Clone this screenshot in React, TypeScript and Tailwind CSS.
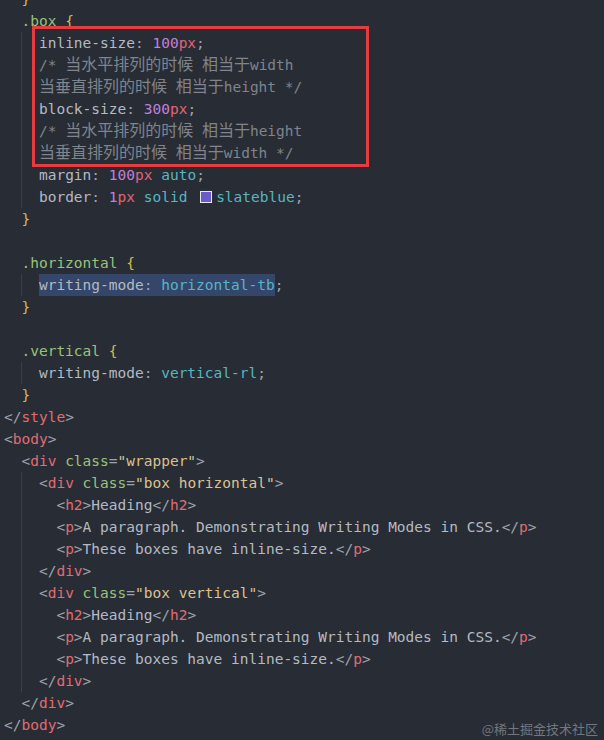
type Tok = [string, string];

interface Line {
  indent: number;
  guide?: boolean;
  tokens: Tok[];
  selected?: number; // number of leading tokens inside the selection
}

const txt = "text-[#b4bac4]";
const sel = "text-[#98c379]";
const brace = "text-[#d9b94a]";
const num = "text-[#c47fdc]";
const unit = "text-[#e0657a]";
const val = "text-[#56b6c2]";
const com = "text-[#7f848e]";
const tag = "text-[#e06c75]";
const punc = "text-[#9ea4ad]";
const attr = "text-[#98c379]";
const str = "text-[#dcc290]";
const cjk = "text-[#7f848e] text-[16px]";

const tagOpen = (name: string): Tok[] => [
  [punc, "<"],
  [tag, name],
  [punc, ">"],
];
const tagClose = (name: string): Tok[] => [
  [punc, "</"],
  [tag, name],
  [punc, ">"],
];
const divWithClass = (cls: string): Tok[] => [
  [punc, "<"],
  [tag, "div"],
  [txt, " "],
  [attr, "class"],
  [punc, "="],
  [str, `"${cls}"`],
  [punc, ">"],
];

const lines: Line[] = [
  { indent: 2, tokens: [[brace, "}"]] },
  { indent: 2, tokens: [[sel, ".box"], [txt, " "], [brace, "{"]] },
  {
    indent: 4,
    guide: true,
    tokens: [[txt, "inline-size"], [punc, ": "], [num, "100"], [unit, "px"], [punc, ";"]],
  },
  {
    indent: 4,
    guide: true,
    tokens: [[com, "/* "], [cjk, "当水平排列的时候"], [com, " "], [cjk, "相当于"], [com, "width"]],
  },
  {
    indent: 4,
    guide: true,
    tokens: [[cjk, "当垂直排列的时候"], [com, " "], [cjk, "相当于"], [com, "height */"]],
  },
  {
    indent: 4,
    guide: true,
    tokens: [[txt, "block-size"], [punc, ": "], [num, "300"], [unit, "px"], [punc, ";"]],
  },
  {
    indent: 4,
    guide: true,
    tokens: [[com, "/* "], [cjk, "当水平排列的时候"], [com, " "], [cjk, "相当于"], [com, "height"]],
  },
  {
    indent: 4,
    guide: true,
    tokens: [[cjk, "当垂直排列的时候"], [com, " "], [cjk, "相当于"], [com, "width */"]],
  },
  {
    indent: 4,
    guide: true,
    tokens: [[txt, "margin"], [punc, ": "], [num, "100"], [unit, "px"], [txt, " "], [val, "auto"], [punc, ";"]],
  },
  {
    indent: 4,
    guide: true,
    tokens: [
      [txt, "border"],
      [punc, ": "],
      [num, "1"],
      [unit, "px"],
      [txt, " "],
      [val, "solid"],
      [txt, " "],
      ["swatch", ""],
      [val, "slateblue"],
      [punc, ";"],
    ],
  },
  { indent: 2, tokens: [[brace, "}"]] },
  { indent: 0, tokens: [] },
  { indent: 2, tokens: [[sel, ".horizontal"], [txt, " "], [brace, "{"]] },
  {
    indent: 4,
    guide: true,
    selected: 3,
    tokens: [[txt, "writing-mode"], [punc, ": "], [val, "horizontal-tb"], [punc, ";"]],
  },
  { indent: 2, tokens: [[brace, "}"]] },
  { indent: 0, tokens: [] },
  { indent: 2, tokens: [[sel, ".vertical"], [txt, " "], [brace, "{"]] },
  {
    indent: 4,
    guide: true,
    tokens: [[txt, "writing-mode"], [punc, ": "], [val, "vertical-rl"], [punc, ";"]],
  },
  { indent: 2, tokens: [[brace, "}"]] },
  { indent: 0, tokens: tagClose("style") },
  { indent: 0, tokens: tagOpen("body") },
  { indent: 2, tokens: divWithClass("wrapper") },
  { indent: 4, guide: true, tokens: divWithClass("box horizontal") },
  { indent: 6, guide: true, tokens: [...tagOpen("h2"), [txt, "Heading"], ...tagClose("h2")] },
  {
    indent: 6,
    guide: true,
    tokens: [...tagOpen("p"), [txt, "A paragraph. Demonstrating Writing Modes in CSS."], ...tagClose("p")],
  },
  {
    indent: 6,
    guide: true,
    tokens: [...tagOpen("p"), [txt, "These boxes have inline-size."], ...tagClose("p")],
  },
  { indent: 4, guide: true, tokens: tagClose("div") },
  { indent: 4, guide: true, tokens: divWithClass("box vertical") },
  { indent: 6, guide: true, tokens: [...tagOpen("h2"), [txt, "Heading"], ...tagClose("h2")] },
  {
    indent: 6,
    guide: true,
    tokens: [...tagOpen("p"), [txt, "A paragraph. Demonstrating Writing Modes in CSS."], ...tagClose("p")],
  },
  {
    indent: 6,
    guide: true,
    tokens: [...tagOpen("p"), [txt, "These boxes have inline-size."], ...tagClose("p")],
  },
  { indent: 4, guide: true, tokens: tagClose("div") },
  { indent: 2, tokens: tagClose("div") },
  { indent: 0, tokens: tagClose("body") },
];

function Token({ t }: { t: Tok }) {
  if (t[0] === "swatch") {
    return (
      <span className="inline-block align-middle w-[12px] h-[12px] ml-[4px] mr-[4px] -mt-[3px] bg-[#6a5acd] border border-[#e8e8f0]" />
    );
  }
  return <span className={t[0]}>{t[1]}</span>;
}

function CodeLine({ line }: { line: Line }) {
  const { indent, guide, tokens, selected = 0 } = line;
  const head = tokens.slice(0, selected);
  const rest = tokens.slice(selected);
  return (
    <div className="h-[22px] leading-[22px] whitespace-pre pl-[4px]">
      {guide ? (
        <>
          <span>{"  "}</span>
          <span className="inline-block align-top h-[22px] shadow-[inset_1px_0_0_#3b4048]">
            {" ".repeat(indent - 2)}
          </span>
        </>
      ) : (
        <span>{" ".repeat(indent)}</span>
      )}
      {head.length > 0 && (
        <span className="inline-block align-top h-[22px] bg-[#34466a]">
          {head.map((t, i) => (
            <Token key={i} t={t} />
          ))}
        </span>
      )}
      {rest.map((t, i) => (
        <Token key={i} t={t} />
      ))}
    </div>
  );
}

export default function App() {
  return (
    <div className="relative w-[604px] h-[740px] overflow-hidden bg-[#282c34] text-[14.5px] text-[#b4bac4] font-['DejaVu_Sans_Mono','Noto_Sans_CJK_SC',monospace]">
      <div className="flex flex-col -mt-[12px]">
        {lines.map((line, i) => (
          <CodeLine key={i} line={line} />
        ))}
      </div>

      {/* highlight box drawn over the logical-size rules */}
      <div className="absolute left-[32px] top-[26px] w-[337px] h-[141px] border-[3px] border-[#e63c3f] pointer-events-none" />

      {/* watermark */}
      <div className="absolute right-[6px] bottom-[5px] text-[13px] leading-none text-[#74777e] font-['Noto_Sans_CJK_SC',sans-serif]">
        @稀土掘金技术社区
      </div>
    </div>
  );
}
